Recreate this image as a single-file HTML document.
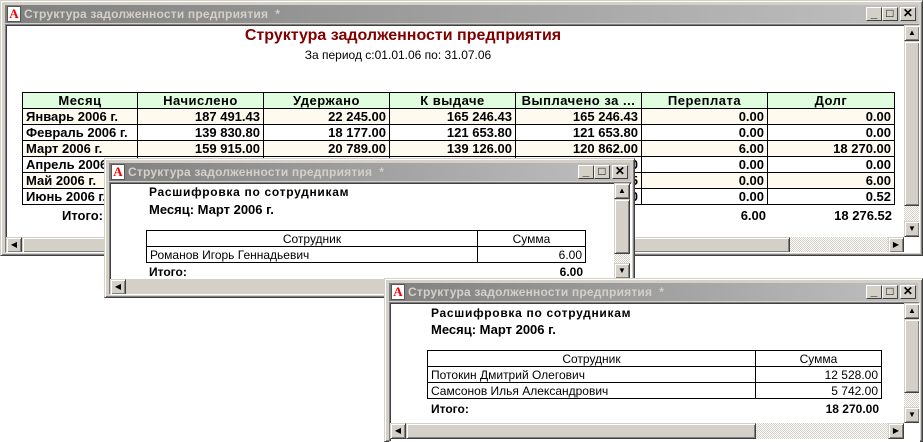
<!DOCTYPE html><html><head><meta charset="utf-8"><style>
*{box-sizing:border-box;margin:0;padding:0}
body{width:923px;height:442px;background:#fff;position:relative;overflow:hidden;font-family:"Liberation Sans",Arial,sans-serif}
.win{position:absolute;background:#d4d0c8;border:1px solid;border-color:#d4d0c8 #404040 #404040 #d4d0c8;box-shadow:inset 1px 1px #fff,inset -1px -1px #808080}
.tb{position:absolute;left:4px;right:4px;top:4px;height:18px;background:linear-gradient(90deg,#808080,#c0c0c0);color:#d4d0c8;font-weight:bold;font-size:12px;line-height:18px;padding-left:19px;white-space:nowrap;overflow:hidden;letter-spacing:.2px}
.ic{position:absolute;left:2px;top:1px;width:14px;height:16px;background:#fff;border:1px solid #555;color:#e00;font-size:13px;line-height:14px;text-align:center;font-weight:bold;font-family:"Liberation Serif",serif}
.btn{position:absolute;top:2px;width:16px;height:14px;background:#d4d0c8;border:1px solid;border-color:#fff #404040 #404040 #fff;color:#000;font-size:12px;line-height:11px;text-align:center;font-weight:bold}
.cl{position:absolute;background:#fff;border:1px solid;border-color:#808080 #fff #fff #808080;box-shadow:inset 1px 1px #404040;overflow:hidden}
.sb{position:absolute;background:repeating-conic-gradient(#d4d0c8 0 25%,#fff 0 50%) 0 0/2px 2px}
.ar{position:absolute;width:16px;height:16px;background:#d4d0c8;border:1px solid;border-color:#d4d0c8 #404040 #404040 #d4d0c8;box-shadow:inset 1px 1px #fff,inset -1px -1px #808080;font-size:8px;line-height:14px;text-align:center}
.th{position:absolute;background:#d4d0c8;border:1px solid;border-color:#d4d0c8 #404040 #404040 #d4d0c8;box-shadow:inset 1px 1px #fff,inset -1px -1px #808080}
table{position:absolute;border-collapse:collapse;table-layout:fixed}
td{border:1px solid #000;height:16px;padding:0 3px;white-space:nowrap;font-size:12px;overflow:hidden;line-height:14px}
.m td{font-weight:bold;text-align:right;font-size:13px}
.m td:first-child{text-align:left}
.m tr.h td{background:#e0fde0;text-align:center;letter-spacing:.5px}
.m tr.y td{background:#fefaf0}
.t{position:absolute;font-size:12px;white-space:nowrap}
.b{font-weight:bold}
</style></head><body>

<div class="win" style="left:0;top:0;width:923px;height:256px">
<div class="tb"><div class="ic">A</div>Структура задолженности предприятия &nbsp;*
<div class="btn" style="right:36px">_</div><div class="btn" style="right:20px">□</div><div class="btn" style="right:2px">✕</div></div>
<div class="cl" style="left:4px;top:23px;width:915px;height:229px">
<div class="t b" style="left:0;width:794px;text-align:center;top:2px;font-size:16px;color:#800000">Структура задолженности предприятия</div>
<div class="t" style="left:0;width:784px;text-align:center;top:23px">За период с:01.01.06 по: 31.07.06</div>
<table class="m" style="left:16px;top:67px;width:872px">
<colgroup><col style="width:115px"><col style="width:126px"><col style="width:126px"><col style="width:126px"><col style="width:126px"><col style="width:126px"><col style="width:127px"></colgroup>
<tr class="h"><td>Месяц</td><td>Начислено</td><td>Удержано</td><td>К выдаче</td><td>Выплачено за ...</td><td>Переплата</td><td>Долг</td></tr>
<tr class="y"><td>Январь 2006 г.</td><td>187 491.43</td><td>22 245.00</td><td>165 246.43</td><td>165 246.43</td><td>0.00</td><td>0.00</td></tr>
<tr><td>Февраль 2006 г.</td><td>139 830.80</td><td>18 177.00</td><td>121 653.80</td><td>121 653.80</td><td>0.00</td><td>0.00</td></tr>
<tr class="y"><td>Март 2006 г.</td><td>159 915.00</td><td>20 789.00</td><td>139 126.00</td><td>120 862.00</td><td>6.00</td><td>18 270.00</td></tr>
<tr><td>Апрель 2006 г.</td><td></td><td></td><td></td><td>0</td><td>0.00</td><td>0.00</td></tr>
<tr class="y"><td>Май 2006 г.</td><td></td><td></td><td></td><td>5</td><td>0.00</td><td>6.00</td></tr>
<tr><td>Июнь 2006 г.</td><td></td><td></td><td></td><td>0</td><td>0.00</td><td>0.52</td></tr>
</table>
<div class="t b" style="left:56px;top:183px;font-size:13px">Итого:</div>
<div class="t b" style="right:153px;top:183px;font-size:13px">6.00</div>
<div class="t b" style="right:27px;top:183px;font-size:13px">18 276.52</div>
<div class="sb" style="left:898px;top:0;width:16px;height:212px"><div class="ar" style="top:0;left:0">▲</div><div class="th" style="top:16px;left:0;width:16px;height:165px"></div><div class="ar" style="bottom:0;left:0">▼</div></div>
<div class="sb" style="left:0;top:212px;width:898px;height:16px"><div class="ar" style="left:0;top:0">◀</div><div class="th" style="left:16px;top:0;width:768px;height:16px"></div><div class="ar" style="right:0;top:0">▶</div></div>
</div></div>

<div class="win" style="left:104px;top:158px;width:531px;height:140px">
<div class="tb"><div class="ic">A</div>Структура задолженности предприятия &nbsp;*
<div class="btn" style="right:36px">_</div><div class="btn" style="right:20px">□</div><div class="btn" style="right:2px">✕</div></div>
<div class="cl" style="left:4px;top:23px;width:523px;height:113px">
<div class="t b" style="left:39px;top:2px;letter-spacing:.7px">Расшифровка по сотрудникам</div>
<div class="t b" style="left:39px;top:19px;font-size:13px">Месяц: Март 2006 г.</div>
<table style="left:36px;top:47px;width:440px"><colgroup><col style="width:331px"><col></colgroup>
<tr><td style="text-align:center">Сотрудник</td><td style="text-align:center">Сумма</td></tr>
<tr><td>Романов Игорь Геннадьевич</td><td style="text-align:right">6.00</td></tr></table>
<div class="t b" style="left:39px;top:82px">Итого:</div>
<div class="t b" style="left:430px;top:82px;width:43px;text-align:right">6.00</div>
<div class="sb" style="left:504px;top:0;width:16px;height:96px"><div class="ar" style="top:0;left:0">▲</div><div class="th" style="top:16px;left:0;width:16px;height:55px"></div><div class="ar" style="bottom:0;left:0">▼</div></div>
<div class="sb" style="left:0;top:96px;width:520px;height:16px;background:#d4d0c8"><div class="ar" style="left:0;top:0">◀</div></div>
</div></div>

<div class="win" style="left:384px;top:278px;width:539px;height:164px">
<div class="tb"><div class="ic">A</div>Структура задолженности предприятия &nbsp;*
<div class="btn" style="right:36px">_</div><div class="btn" style="right:20px">□</div><div class="btn" style="right:2px">✕</div></div>
<div class="cl" style="left:4px;top:23px;width:531px;height:140px">
<div class="t b" style="left:41px;top:3px;letter-spacing:.7px">Расшифровка по сотрудникам</div>
<div class="t b" style="left:41px;top:19px;font-size:13px">Месяц: Март 2006 г.</div>
<table style="left:37px;top:47px;width:455px"><colgroup><col style="width:328px"><col></colgroup>
<tr><td style="text-align:center">Сотрудник</td><td style="text-align:center">Сумма</td></tr>
<tr><td>Потокин Дмитрий Олегович</td><td style="text-align:right">12 528.00</td></tr>
<tr><td>Самсонов Илья Александрович</td><td style="text-align:right">5 742.00</td></tr></table>
<div class="t b" style="left:41px;top:99px">Итого:</div>
<div class="t b" style="left:400px;top:99px;width:89px;text-align:right">18 270.00</div>
<div class="sb" style="left:514px;top:0;width:16px;height:120px"><div class="ar" style="top:0;left:0">▲</div><div class="th" style="top:16px;left:0;width:16px;height:74px"></div><div class="ar" style="bottom:0;left:0">▼</div></div>
<div class="sb" style="left:0;top:120px;width:514px;height:16px"><div class="ar" style="left:0;top:0">◀</div><div class="th" style="left:16px;top:0;width:350px;height:16px"></div><div class="ar" style="right:0;top:0">▶</div></div>
</div></div>
</body></html>
